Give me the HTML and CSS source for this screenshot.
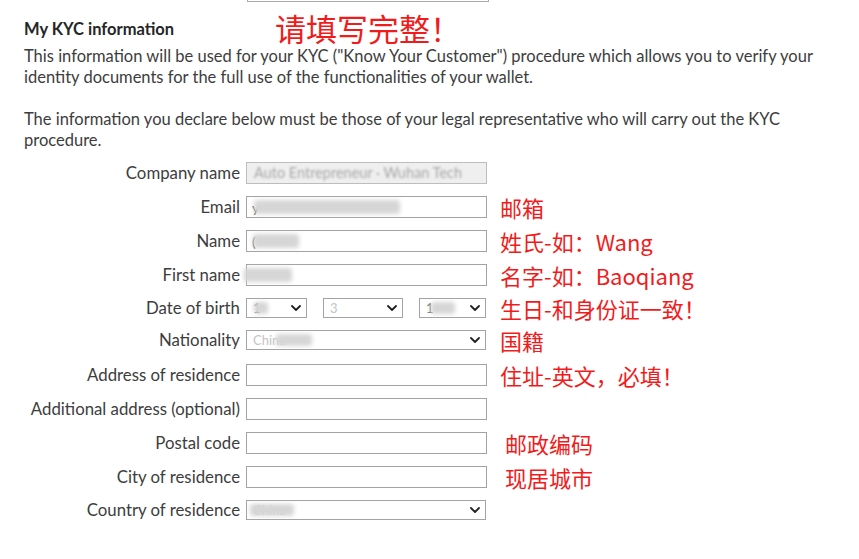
FILE: index.html
```html
<!DOCTYPE html>
<html lang="en">
<head>
<meta charset="utf-8">
<title>My KYC information</title>
<link rel="stylesheet" href="styles.css">
</head>
<body>
<div class="page">
  <div class="prev-box"></div>
  <div class="header">
    <h2 class="title">My KYC information</h2>
    <span class="alert">请填写完整！</span>
  </div>
  <p class="intro">This information will be used for your KYC ("Know Your Customer") procedure which allows you to verify your identity documents for the full use of the functionalities of your wallet.</p>
  <p class="intro second">The information you declare below must be those of your legal representative who will carry out the KYC procedure.</p>

  <form class="form">
    <div class="row">
      <label class="lbl">Company name</label>
      <div class="ctl field">
        <input class="inp disabled" type="text" disabled>
        <span class="ghost">Auto Entrepreneur · Wuhan Tech</span>
      </div>
      <span class="note"></span>
    </div>
    <div class="row">
      <label class="lbl">Email</label>
      <div class="ctl field">
        <input class="inp" type="text" value="y">
        <span class="blob" style="left:8px;width:146px"></span>
      </div>
      <span class="note">邮箱</span>
    </div>
    <div class="row">
      <label class="lbl">Name</label>
      <div class="ctl field">
        <input class="inp" type="text" value="(">
        <span class="blob" style="left:7px;width:46px"></span>
      </div>
      <span class="note">姓氏-如：Wang</span>
    </div>
    <div class="row">
      <label class="lbl">First name</label>
      <div class="ctl field">
        <input class="inp" type="text">
        <span class="blob" style="left:-2px;width:48px"></span>
      </div>
      <span class="note">名字-如：Baoqiang</span>
    </div>
    <div class="row">
      <label class="lbl">Date of birth</label>
      <div class="ctl dates">
        <span class="sel d1"><select class="select"><option>1</option></select><span class="blob sm" style="left:8px;width:14px"></span><svg class="chev" viewBox="0 0 10 6"><path d="M1 1l4 4 4-4"/></svg></span>
        <span class="sel d2"><select class="select faint"><option>3</option></select><svg class="chev" viewBox="0 0 10 6"><path d="M1 1l4 4 4-4"/></svg></span>
        <span class="sel d3"><select class="select"><option>1</option></select><span class="blob sm" style="left:12px;width:24px"></span><svg class="chev" viewBox="0 0 10 6"><path d="M1 1l4 4 4-4"/></svg></span>
      </div>
      <span class="note">生日-和身份证一致！</span>
    </div>
    <div class="row row-nat">
      <label class="lbl">Nationality</label>
      <div class="ctl">
        <span class="sel wide"><select class="select faint"><option>China</option></select><span class="blob sm" style="left:30px;width:36px"></span><svg class="chev" viewBox="0 0 10 6"><path d="M1 1l4 4 4-4"/></svg></span>
      </div>
      <span class="note">国籍</span>
    </div>
    <div class="row">
      <label class="lbl">Address of residence</label>
      <div class="ctl"><input class="inp" type="text"></div>
      <span class="note">住址-英文，必填！</span>
    </div>
    <div class="row">
      <label class="lbl">Additional address (optional)</label>
      <div class="ctl"><input class="inp" type="text"></div>
      <span class="note"></span>
    </div>
    <div class="row">
      <label class="lbl">Postal code</label>
      <div class="ctl"><input class="inp" type="text"></div>
      <span class="note shift">邮政编码</span>
    </div>
    <div class="row">
      <label class="lbl">City of residence</label>
      <div class="ctl"><input class="inp" type="text"></div>
      <span class="note shift">现居城市</span>
    </div>
    <div class="row">
      <label class="lbl">Country of residence</label>
      <div class="ctl">
        <span class="sel wide"><select class="select faint"><option>China</option></select><span class="blob sm" style="left:4px;width:44px"></span><svg class="chev" viewBox="0 0 10 6"><path d="M1 1l4 4 4-4"/></svg></span>
      </div>
      <span class="note"></span>
    </div>
  </form>
</div>
</body>
</html>
```

FILE: styles.css
```css
html, body {
  margin: 0;
  padding: 0;
  background: #ffffff;
}

.page {
  padding-left: 24px;
  font-family: "Lato", "Liberation Sans", sans-serif;
  font-size: 16.5px;
  color: #3d3d3d;
}

.prev-box {
  margin-left: 223px;
  width: 240px;
  height: 1px;
  border: 1px solid #a9a9a9;
  border-top: 0;
}

.header {
  display: flex;
  align-items: center;
  height: 35px;
  margin-top: 9px;
}

.title {
  margin: 0;
  width: 251px;
  font-size: 16.5px;
  font-weight: 700;
  color: #262626;
}

.alert {
  font-family: "Noto Sans CJK SC", sans-serif;
  font-size: 31px;
  line-height: 28px;
  color: #f21b1b;
  margin-bottom: 2px;
}

.intro {
  margin: 0;
  width: 800px;
  line-height: 21px;
}

.intro.second {
  margin-top: 21px;
}

.form {
  margin-top: 11px;
  display: flex;
  flex-direction: column;
  gap: 12px;
}

.row {
  display: grid;
  grid-template-columns: 216px 241px 1fr;
  column-gap: 6px;
  align-items: center;
}

.row-nat {
  margin-bottom: 2px;
}

.lbl {
  text-align: right;
  line-height: 20px;
  font-size: 16.8px;
  white-space: nowrap;
}

.ctl {
  display: flex;
  align-items: center;
  height: 100%;
}

.field {
  position: relative;
}

.inp {
  box-sizing: border-box;
  width: 241px;
  height: 22px;
  margin: 0;
  padding: 0 5px;
  border: 1px solid #a3a3a3;
  border-radius: 0;
  background: #ffffff;
  font-family: "Lato", "Liberation Sans", sans-serif;
  font-size: 14px;
  color: #555;
  outline: none;
}

.inp.disabled {
  background: #efefef;
  border-color: #bdbdbd;
}

.ghost {
  position: absolute;
  left: 8px;
  top: 2px;
  font-size: 14.5px;
  color: #a8a8a8;
  filter: blur(1.2px);
  white-space: nowrap;
  overflow: hidden;
  width: 228px;
}

.blob {
  position: absolute;
  top: 4px;
  height: 14px;
  background: #d6d6d6;
  filter: blur(2px);
  border-radius: 3px;
}

.blob.sm {
  top: 4px;
  height: 12px;
}

.dates {
  gap: 16px;
}

.sel {
  position: relative;
  display: block;
  height: 20px;
}

.sel.d1 { width: 61px; }
.sel.d2 { width: 80px; }
.sel.d3 { width: 67px; }
.sel.wide { width: 240px; }

.select {
  appearance: none;
  -webkit-appearance: none;
  display: block;
  box-sizing: border-box;
  width: 100%;
  height: 20px;
  margin: 0;
  padding: 0 20px 0 6px;
  border: 1px solid #a3a3a3;
  border-radius: 0;
  background: #ffffff;
  font-family: "Lato", "Liberation Sans", sans-serif;
  font-size: 13px;
  color: #777;
}

.select.faint {
  color: #c4c4c4;
}

.chev {
  position: absolute;
  right: 6px;
  top: 7px;
  width: 10px;
  height: 6px;
  fill: none;
  stroke: #222;
  stroke-width: 1.8;
  stroke-linecap: round;
  stroke-linejoin: round;
}

.note {
  padding-left: 7px;
  font-family: "Noto Sans CJK SC", sans-serif;
  font-size: 22px;
  line-height: 20px;
  color: #f21b1b;
  white-space: nowrap;
}

.note.shift {
  padding-left: 12px;
}
```
